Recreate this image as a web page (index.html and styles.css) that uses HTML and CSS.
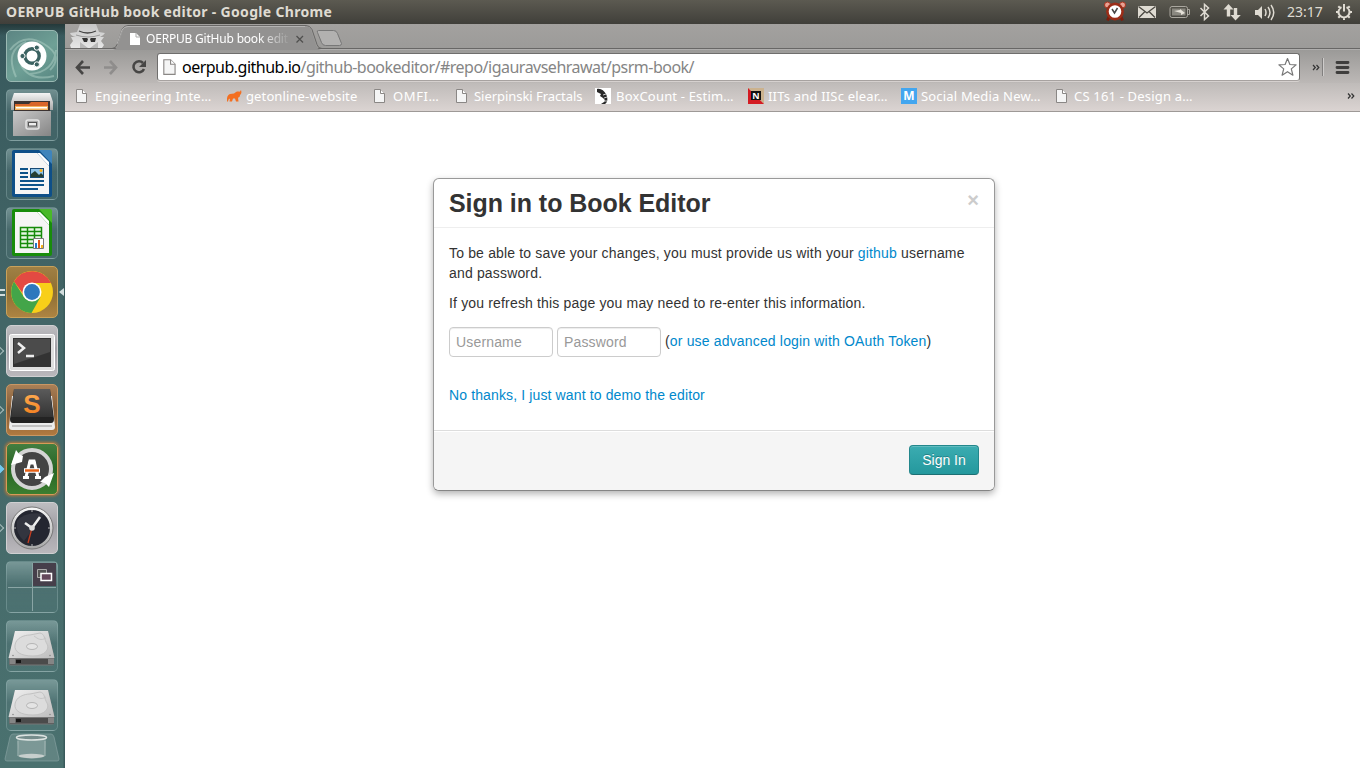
FILE: index.html
```html
<!DOCTYPE html>
<html lang="en">
<head>
<meta charset="utf-8">
<title>OERPUB GitHub book editor</title>
<link rel="stylesheet" href="styles.css">
</head>
<body>
<svg class="defs" width="0" height="0">
  <defs>
    <linearGradient id="silver" x1="0" y1="0" x2="0" y2="1"><stop offset="0" stop-color="#f4f4f4"/><stop offset="1" stop-color="#a8a8a8"/></linearGradient>
    <linearGradient id="dark" x1="0" y1="0" x2="0" y2="1"><stop offset="0" stop-color="#5b5b5b"/><stop offset="1" stop-color="#333"/></linearGradient>
    <linearGradient id="orange" x1="0" y1="0" x2="0" y2="1"><stop offset="0" stop-color="#ffb35a"/><stop offset="1" stop-color="#f07818"/></linearGradient>
    <linearGradient id="metal" x1="0" y1="0" x2="1" y2="1"><stop offset="0" stop-color="#f0f0f0"/><stop offset="1" stop-color="#bdbdbd"/></linearGradient>
    <linearGradient id="cabinet" x1="0" y1="0" x2="1" y2="1"><stop offset="0" stop-color="#c8c8c8"/><stop offset="1" stop-color="#858585"/></linearGradient>
    <linearGradient id="spy" x1="0" y1="0" x2="0" y2="1"><stop offset="0" stop-color="#c6c6c6"/><stop offset="1" stop-color="#e6e6e6"/></linearGradient>
  </defs>
  <symbol id="page" viewBox="0 0 16 16"><path d="M2.500 1.500h6l4 4v9h-10z" fill="#f5f5f5" stroke="#8a8785"/><path d="M8.500 1.500v4h4" fill="#fff" stroke="#8a8785"/></symbol>
  <symbol id="drive" viewBox="0 0 52 52">
    <path d="M9 11h33l6 25v8q0 1.500-2 1.500H5q-2 0-2-1.500v-7z" fill="#777"/>
    <path d="M9 11h33l6.500 27h-46z" fill="url(#metal)"/>
    <path d="M3.500 39h44.500v5.500H3.500z" fill="#4b4b4b"/><path d="M3.500 39h6v5h-6zM42 39h6v5h-6z" fill="#858585"/><path d="M10 40h5v3h-5z" fill="#151515"/>
    <path d="M41 24c3 5-2 12-14 12S8 32 9 25s9-10 15-10l10-2c5 1 4 6 7 11z" fill="#dcdcdc" stroke="#c2c2c2"/>
    <path d="M40 18c-5 3-8 1-12-2" fill="none" stroke="#c5c5c5"/>
    <ellipse cx="26" cy="26.500" rx="5.500" ry="3" fill="#e4e4e4" stroke="#b5b5b5"/>
    <circle cx="7" cy="35.500" r=".8" fill="#888"/><circle cx="44" cy="35.500" r=".8" fill="#888"/>
  </symbol>
</svg>

<header class="panel">
  <div class="panel-title">OERPUB GitHub book editor - Google Chrome</div>
  <svg class="indicators" width="200" height="24" viewBox="1100 0 200 24">
    <path d="M1109 17l-1.500 3.500M1121 17l1.500 3.500" stroke="#7d1d0c" stroke-width="3"/>
    <circle cx="1107.500" cy="5" r="3" fill="#e8a294" stroke="#a8311c"/><circle cx="1122.500" cy="5" r="3" fill="#e8a294" stroke="#a8311c"/>
    <circle cx="1115" cy="11.500" r="7.600" fill="#fff" stroke="#9b2d18" stroke-width="2.600"/><path d="M1112 9l2.500 4 3-5" fill="none" stroke="#444" stroke-width="1.500"/>
    <path d="M1138 6h18v12h-18z" fill="#dfdbd2"/><path d="M1138.500 6.500l8.500 6.500 8.500-6.500M1139 17.500l6-6M1155 17.500l-6-6" fill="none" stroke="#4a4841" stroke-width="1.300"/>
    <rect x="1170" y="6.500" width="17.500" height="11" rx="2" fill="none" stroke="#aaa79f"/><rect x="1172" y="8.500" width="13.500" height="7" fill="#8a8880"/><path d="M1188 9.500h1.500v5H1188" fill="none" stroke="#aaa79f"/><path d="M1174 11l6-1v-1l5 4-4 2v-2z" fill="#e5e1d8"/>
    <path d="M1200.500 8l8 8-4 3.500v-15l4 3.500-8 8" fill="none" stroke="#dfdbd2" stroke-width="1.500"/>
    <path d="M1228.500 4l5 5.500h-3.300v7h-3.400v-7h-3.300zM1235.500 20.500l-5-5.500h3.300V8h3.400v7h3.600z" fill="#dfdbd2"/>
    <path d="M1255 10h3l4-4v13l-4-4h-3z" fill="#dfdbd2"/><path d="M1265 9q2 3.500 0 7M1268 7q4 5.500 0 11M1271 5q5.500 7.500 0 15" fill="none" stroke="#dfdbd2" stroke-width="1.500"/>
  </svg>
  <span class="clock">23:17</span>
  <svg width="18" height="18" viewBox="0 0 18 18"><path d="M6.500 4.100a5.500 5.500 0 1 0 5 0M9 8.500V1M1 9h2.500M14.500 9H17M3.300 3.300l2 2M14.700 3.300l-2 2M3.300 14.700l2-2M14.700 14.700l-2-2M9 14.500V17" fill="none" stroke="#dfdbd2" stroke-width="2"/></svg>
</header>

<div class="desktop">
  <nav class="launcher">
    <div class="tile tile-dash"><svg viewBox="0 0 52 52"><g fill="none" stroke="#b9d6cc" stroke-opacity=".45" stroke-width="2"><path d="M4 20Q18 2 38 14T44 40M10 47Q-2 20 20 12M24 44Q48 42 50 20M15 35Q24 52 48 46"/></g><circle cx="26" cy="26" r="14.500" fill="#fff"/><circle cx="26" cy="26" r="7.200" fill="none" stroke="#3b6261" stroke-width="3.400"/><g fill="#3b6261" stroke="#fff" stroke-width="1"><circle cx="16.500" cy="26" r="2.600"/><circle cx="30.800" cy="17.600" r="2.600"/><circle cx="30.800" cy="34.400" r="2.600"/></g></svg></div>
    <div class="tile"><svg viewBox="0 0 52 52"><path d="M8 4h36l3 9v8H5v-8z" fill="url(#silver)"/><path d="M8 12h36v12H8z" fill="#3c3331"/><path d="M9 15h14l2-2h17v7H9z" fill="#d9662a"/><path d="M9 17h33v4H9z" fill="#f4b45e"/><path d="M10 18h31v1.500H10z" fill="#fff"/><path d="M7 22h38v25H7z" fill="url(#cabinet)"/><rect x="20" y="31" width="13" height="9" rx="2" fill="#aaa" stroke="#e5e5e5" stroke-width="1.500"/><rect x="22.500" y="33.500" width="8" height="3.500" fill="#eee" stroke="#555"/></svg></div>
    <div class="tile"><svg viewBox="0 0 52 52"><path d="M8 2h27l11 12v33q0 2-2 2H8q-2 0-2-2V4q0-2 2-2z" fill="#0e4f88"/><path d="M33 2h11q2 0 2 2v12z" fill="#3f84bb"/><path d="M9 5h22l12 13v28H9z" fill="#f5f5f5"/><path d="M31 5l12 13V14L34 5z" fill="#fff"/><path d="M14 21h8M14 25h8M14 29h8M14 33h24M14 37h24M14 41h18" stroke="#0e5389" stroke-width="2"/><rect x="24.500" y="20.500" width="13" height="9" fill="#90c4e8" stroke="#174a74"/><path d="M25 29v-3l4-3 4 4 2-2 2 2v2z" fill="#263e31"/><circle cx="35" cy="22.500" r="1.500" fill="#f9b11a"/></svg></div>
    <div class="tile"><svg viewBox="0 0 52 52"><path d="M8 2h27l11 12v33q0 2-2 2H8q-2 0-2-2V4q0-2 2-2z" fill="#188c0b"/><path d="M33 2h11q2 0 2 2v12z" fill="#49b928"/><path d="M9 5h22l12 13v28H9z" fill="#f5f5f5"/><path d="M31 5l12 13V14L34 5z" fill="#fff"/><path d="M14.500 20.500h21v20h-21zM14.500 24.500h21M14.500 28.500h21M14.500 32.500h21M14.500 36.500h21M21.500 20.500v20M28.500 20.500v20" fill="#e7f6e2" stroke="#168b0a" stroke-width="1.500"/><path d="M27.500 31.500h10v10h-10z" fill="#fff" stroke="#777"/><path d="M29 36h2v5h-2z" fill="#2478c7"/><path d="M32 33h2v8h-2z" fill="#e15917"/><path d="M35 38h2v3h-2z" fill="#f5b420"/></svg></div>
    <div class="tile tile-gold"><i class="pips"></i><i class="focus"></i><svg viewBox="0 0 52 52"><circle cx="26" cy="26" r="21" fill="#f8cf19"/><path d="M8 15.500A21 21 0 0 1 45 17H26l-8 12z" fill="#e34a42"/><path d="M8 15.500L18 31q4 5 10 4L34.500 31 25.500 47A21 21 0 0 1 8 15.500" fill="#43a549"/><circle cx="26" cy="26" r="9.500" fill="#fff"/><circle cx="26" cy="26" r="7.900" fill="#2e78bd"/></svg></div>
    <div class="tile tile-light"><i class="arrow"></i><svg viewBox="0 0 52 52"><rect x="3.500" y="9.500" width="45" height="36" rx="2" fill="#dedede" stroke="#fff"/><rect x="7" y="13" width="38" height="29" fill="#333"/><path d="M8 14h36v13L8 39z" fill="#4b4b4b"/><path d="M12 18l6 5-6 5M20 31h8" fill="none" stroke="#eee" stroke-width="2.500"/></svg></div>
    <div class="tile tile-brown"><i class="arrow"></i><svg viewBox="0 0 52 52"><path d="M6 12h40l3 31q0 3-3 3H6q-3 0-3-3z" fill="#ededed"/><path d="M6 42h40" stroke="#999"/><path d="M8 5h36l4 30q0 4-3 4H7q-3 0-3-4z" fill="#232323"/><path d="M8 5h36l3 28H5z" fill="url(#dark)"/><text x="26" y="29" class="glyph sublime" fill="url(#orange)">S</text></svg></div>
    <div class="tile tile-green"><i class="arrow arrow-blue"></i><svg viewBox="0 0 52 52"><circle cx="26" cy="26" r="19" fill="#444" stroke="#d4d4d4" stroke-width="4"/><path d="M5 22L10 7l3 4 4 2-1 6zM48 30l-5 14-4-4-5-1 5-5z" fill="#fff"/><path d="M17 34.500h6M29 34.500h6M20 34l4-16h4l4 16M22 20h8" fill="none" stroke="#fff" stroke-width="3"/><path d="M18 27.500h16" stroke="#fff" stroke-width="4.500"/><path d="M19 27.500h14" stroke="#e66219" stroke-width="2.500"/></svg></div>
    <div class="tile tile-light"><i class="arrow"></i><svg viewBox="0 0 52 52"><circle cx="26" cy="26" r="19.500" fill="#242630" stroke="url(#silver)" stroke-width="3"/><circle cx="26" cy="26" r="21" fill="none" stroke="#777"/><path d="M11 19q8-10 27-7L18 39q-9-8-7-20" fill="#41444e" opacity=".5"/><path d="M19 21l7 5 8-11" fill="none" stroke="#eee" stroke-width="2.500"/><path d="M26 26l-4 15" stroke="#c63c1e" stroke-width="1.300"/><circle cx="26" cy="26" r="2.800" fill="#ddd"/><path d="M26 8v2M26 42v2M8 26h2M42 26h2" stroke="#bbb"/></svg></div>
    <div class="tile"><svg viewBox="0 0 52 52"><path d="M27 2h23v23H27z" fill="#463f4b"/><path d="M26.500 2v48M2 26.500h48" stroke="#8aa5a5"/><path d="M31.500 8.500h9v8h-9z" fill="#555" stroke="#aaa"/><path d="M35 12.500h10.500v7H35z" fill="#65485b" stroke="#fff" stroke-width="1.500"/></svg></div>
    <div class="tile"><svg viewBox="0 0 52 52"><use href="#drive"/></svg></div>
    <div class="tile"><svg viewBox="0 0 52 52"><use href="#drive"/></svg></div>
    <svg class="trash" viewBox="0 0 56 30"><path d="M9 1h38q2 0 3 3l5 22q0 2-2 2H3q-2 0-2-2L6 4q1-3 3-3z" fill="#789594" fill-opacity=".5" stroke="#84a09f" stroke-opacity=".7"/><path d="M13 5h29l-1 18q-13 6-26 0z" fill="#aebfbc" opacity=".35"/><ellipse cx="27.500" cy="4.500" rx="15" ry="2.500" fill="#758c8b" stroke="#dce3e1" stroke-width="1.500"/><path d="M14 8v15M41 8v15" stroke="#a5b8b6"/><ellipse cx="27.500" cy="23" rx="13" ry="2.200" fill="#c7cfcd"/></svg>
  </nav>

  <div class="browser">
    <div class="tabstrip">
      <svg class="tabs-shape" width="290" height="26" viewBox="65 24 290 26">
        <path d="M65 48.500h47q4 0 5-4l5-15q2-4 6-4h178q4 0 6 4l5 15q1 4 5 4h38" fill="none" stroke="#686766"/>
        <path d="M113 50q4-1 5-5l5-15q1-3.500 5-3.500h178q4 0 5 3.500l5 15q1 4 5 5z" fill="#939291"/>
        <path d="M117 44l5-14q2-3.500 6-3.500h177" fill="none" stroke="#b4b3b2"/>
        <path d="M318.500 30.500h15q3 0 4 3l4 10q0 2-2 2h-14q-3 0-4-3l-4-10q-1-2 1-2z" fill="#b2b1b0" stroke="#777"/>
        <path d="M80 24h16l3 8 6 1q-1 2-5 4h4l-3 4 3 4-2 3H71l-1-3 3-4-2-4h5q-5-1-6-4l7-1z" fill="url(#spy)"/>
        <path d="M79 31q8.500 4 17 0" fill="none" stroke="#444" stroke-width="1.300"/><path d="M76 35q12 4 24 0" fill="none" stroke="#999"/>
        <path d="M82 38h5l1 1h2l1-1h5l-1 4h-4l-1-3h-2l-1 3h-3z" fill="#333"/><path d="M80 42l8 6h-8zM98 42l-8 6h8z" fill="#b9b9b9"/>
        <path d="M130 33h6l4 4v8h-10z" fill="#fff"/><path d="M136 33v4h4" fill="none" stroke="#aaa"/>
        <path d="M296.500 36l6.500 6.500M303 36l-6.500 6.500" stroke="#50504f" stroke-width="1.300"/>
      </svg>
      <div class="tab-label">OERPUB GitHub book edit</div>
    </div>

    <div class="toolbar">
      <svg class="nav-icons" width="84" height="28" viewBox="70 53 84 28"><g fill="none" stroke-width="2.600"><path d="M83 61l-6 6.500 6 6.500M77 67.500h13" stroke="#474645"/><path d="M110 61l6 6.500-6 6.500M116 67.500h-12" stroke="#8f8d8c"/><path d="M143 63a5.500 5.500 0 1 0 1 6" stroke="#474645"/></g><path d="M146 60v7h-7z" fill="#474645"/></svg>
      <div class="omnibox">
        <svg width="18" height="18" viewBox="0 0 16 16"><use href="#page"/></svg>
        <span class="url"><b>oerpub.github.io</b>/github-bookeditor/#repo/igauravsehrawat/psrm-book/</span>
        <svg width="20" height="20" viewBox="0 0 20 20"><path d="M10.500 1.500l2.400 6 6.200.400-4.800 4 1.600 6.300-5.400-3.500-5.400 3.500 1.600-6.300-4.800-4 6.200-.400z" fill="#fff" stroke="#777" stroke-width="1.200" stroke-linejoin="round"/></svg>
      </div>
      <svg class="tool-icons" width="60" height="28" viewBox="1300 53 60 28"><path d="M1313 65l2.300 2.500-2.300 2.500M1316.500 65l2.300 2.500-2.300 2.500" fill="none" stroke="#333" stroke-width="1.200"/><path d="M1322.500 58v18" stroke="#817f7e"/><path d="M1323.500 58v18" stroke="#cecccb"/><path d="M1337 62.500h11M1337 67.500h11M1337 72.500h11" stroke="#3f3e3d" stroke-width="2.800" stroke-linecap="round"/></svg>
    </div>

    <div class="bookmarks">
      <div class="bm bm-1"><svg viewBox="0 0 16 16"><use href="#page"/></svg>Engineering Inte…</div>
      <div class="bm bm-2"><svg viewBox="0 0 16 16"><path d="M1 13.500c0-4 0-6 3-7.500l4-.5 2-1.500c2-1 3 0 4-.5l1-1.500c1 3 0 4-1 5 0 2-1 2.500-2 2.500l.5 4H10l-1-3H7l-1 3H3.500l.5-3-1.500 1-.5 2z" fill="#f36f21"/></svg>getonline-website</div>
      <div class="bm bm-3"><svg viewBox="0 0 16 16"><use href="#page"/></svg>OMFI…</div>
      <div class="bm bm-4"><svg viewBox="0 0 16 16"><use href="#page"/></svg>Sierpinski Fractals</div>
      <div class="bm bm-5"><svg viewBox="0 0 16 16"><path d="M0 0h16v16H0z" fill="#fff"/><path d="M2 1c4-1 7 2 9 5 2 4 2 8-1 10H6l3-2c2-2 0-3-1-4l-3-2 1-2-4-2z" fill="#292929"/><path d="M8 7l3-1M9 10l3-1M9 13l3 0" stroke="#ccc"/></svg>BoxCount - Estim…</div>
      <div class="bm bm-6"><svg viewBox="0 0 16 16"><path d="M0 0h16v16z" fill="#cbb28e"/><path d="M0 0v16h16z" fill="#d41b22"/><path d="M3 3h10v9H3z" fill="#111"/><text x="8" y="11.300" class="glyph news" fill="#fff">N</text></svg>IITs and IISc elear…</div>
      <div class="bm bm-7"><svg viewBox="0 0 16 16"><path d="M0 0h16v16H0z" fill="#43a6ef"/><text x="8" y="12.200" class="glyph mash" fill="#fff">M</text></svg>Social Media New…</div>
      <div class="bm bm-8"><svg viewBox="0 0 16 16"><use href="#page"/></svg>CS 161 - Design a…</div>
      <svg class="more" viewBox="0 0 8 8"><path d="M1 1.500L3.300 4 1 6.500M4.500 1.500L6.800 4 4.500 6.500" fill="none" stroke="#333" stroke-width="1.200"/></svg>
    </div>

    <main class="viewport">
      <section class="modal">
        <div class="modal-header"><h3>Sign in to Book Editor</h3><button class="close">×</button></div>
        <div class="modal-body">
          <p>To be able to save your changes, you must provide us with your <a>github</a> username and password.</p>
          <p>If you refresh this page you may need to re-enter this information.</p>
          <div class="login"><input type="text" placeholder="Username"><input type="password" placeholder="Password"><span>(<a>or use advanced login with OAuth Token</a>)</span></div>
          <p class="demo"><a>No thanks, I just want to demo the editor</a></p>
        </div>
        <div class="modal-footer"><button class="btn">Sign In</button></div>
      </section>
    </main>
  </div>
</div>
</body>
</html>
```
FILE: styles.css
```css
* { box-sizing: border-box; }
body { margin: 0; width: 1360px; height: 768px; overflow: hidden; background: #fff; font: 14px/20px "Liberation Sans", Arial, sans-serif; color: #333; }
svg { display: block; flex: none; }
.defs { position: absolute; }

.panel { display: flex; align-items: center; height: 24px; padding: 0 7px 0 6px; background: linear-gradient(#5c5a51, #403f3a); color: #dfdbd2; font-family: "Noto Sans", sans-serif; }
.panel-title { flex: 1; font-size: 14px; font-weight: 700; white-space: nowrap; letter-spacing: .31px; }
.indicators { margin-right: -13px; }
.clock { width: 48px; font-size: 14px; }

.desktop { display: flex; height: 744px; }
.launcher { display: flex; flex-direction: column; gap: 7px; flex: none; width: 65px; padding: 6px 0 0 6px; background: linear-gradient(#24393a, transparent 12px), linear-gradient(90deg, transparent 63px, #395a5b 64px), linear-gradient(#38595d, #436667 40%, #4a716f); }
.tile { position: relative; flex: none; width: 52px; height: 52px; border: 1px solid rgba(160,190,190,.35); border-radius: 5px; background: linear-gradient(rgba(180,205,205,.45), rgba(100,130,135,.2) 45%, rgba(100,140,140,.15)); }
.tile svg { width: 52px; height: 52px; margin: -1px; border-radius: 5px; }
.tile-dash { background: linear-gradient(145deg, #5c8583, #6fa096 55%, #578681); border-color: #9ab9b3; }
.tile-gold { background: linear-gradient(#a08044, #8d6e34 50%, #ad8442); border-color: #c9a25b; }
.tile-light { background: linear-gradient(#bdbdc0, #a19fa5 45%, #bab8bc); border-color: #d0d0d2; }
.tile-brown { background: linear-gradient(#aa8056, #815a36 50%, #b17a40); border-color: #c99764; }
.tile-green { background: linear-gradient(#437e40, #286525 50%, #3b7e30); border-color: #d79b58; box-shadow: 0 0 3px 1px #b97937; }
.glyph { text-anchor: middle; font-family: "Open Sans", sans-serif; font-weight: 700; }
.sublime { font: 700 26px "Liberation Sans", sans-serif; }
.news { font-size: 9px; }
.mash { font-size: 12px; }
.arrow, .pips, .focus { position: absolute; }
.arrow { left: -10px; top: 22px; width: 6px; height: 6px; border: solid #a7bcbb; border-width: 1px 1px 0 0; transform: rotate(45deg); }
.arrow-blue { background: #72c8ee; border-color: #72c8ee; }
.pips { left: -7px; top: 22px; width: 5px; height: 7px; border: solid #d2dddd; border-width: 2px 0; }
.focus { right: -7px; top: 21px; border: 4px solid transparent; border-right: 5px solid #d2dddd; border-left: 0; }
.trash { width: 56px; height: 30px; margin: -5px 0 0 -2px; }

.browser { display: flex; flex-direction: column; width: 1295px; }
.tabstrip { display: grid; height: 26px; background: linear-gradient(#a3a19f, #9c9b99 24px, #686766 24px, #686766 25px, #afaead 25px); }
.tabs-shape, .tab-label { grid-area: 1 / 1; }
.tab-label { width: 144px; margin-left: 81px; padding-top: 5px; color: #fff; font: 12px/20px "Noto Sans", sans-serif; letter-spacing: -.2px; white-space: nowrap; mask-image: linear-gradient(90deg, #000 112px, transparent 145px); }
.toolbar { display: flex; height: 33px; padding: 3px 0 2px 5px; background: linear-gradient(#9b9a98, #bcb8b6); }
.nav-icons { margin-right: 3px; }
.omnibox { display: flex; align-items: center; width: 1143px; height: 28px; margin: 0; padding: 0 2px 0 3px; border: 1px solid #6f6e6d; border-bottom-color: #a7a2a0; border-radius: 3px; background: #fff; box-shadow: 0 1px #d6d1cf; }
.url { flex: 1; margin-left: 3px; color: #858585; font: 16px/24px "Noto Sans", sans-serif; white-space: nowrap; letter-spacing: -.51px; }
.url b { color: #000; font-weight: 400; }
.bookmarks { display: grid; grid-template-columns: 152px 146px 82px 141px 153px 153px 153px 293px 8px; align-items: center; height: 29px; padding: 0 0 3px 9px; border-bottom: 1px solid #9e9997; background: linear-gradient(#bfbbb9, #dbd4d2); }
.bm { display: flex; align-items: center; gap: 4px; color: #fff; font: 13px/18px "Noto Sans", sans-serif; white-space: nowrap; letter-spacing: .18px; }
.bm-1 { gap: 5px; letter-spacing: .25px; }
.bm-2 { letter-spacing: .12px; }
.bm-3 { gap: 5px; letter-spacing: .6px; }
.bm-4 { letter-spacing: -.05px; }
.bm-5 { gap: 5px; }
.bm svg { width: 16px; height: 16px; }
.more { width: 8px; height: 8px; }

.viewport { flex: 1; padding-top: 66px; background: #fff; }
.modal { width: 562px; height: 313px; margin-left: 368px; border: 1px solid #999; border-bottom-color: #858585; border-radius: 6px; background: #fff; box-shadow: 0 3px 7px rgba(0,0,0,.3); overflow: hidden; letter-spacing: .165px; }
.modal-header { display: flex; justify-content: space-between; height: 49px; padding: 9px 15px; border-bottom: 1px solid #eee; }
h3 { margin: 0; font-size: 25px; line-height: 31px; letter-spacing: -.05px; }
button { font-family: inherit; border: 0; }
.close { align-self: flex-start; margin-top: 2px; padding: 0; background: none; color: #ccc; font-size: 20px; line-height: 20px; font-weight: 700; }
.modal-body { height: 202px; padding: 15px; }
p { margin: 0 0 10px; }
a { color: #0088cc; }
.login { display: flex; gap: 4px; margin-top: 14px; line-height: 28px; }
input { width: 104px; height: 30px; padding: 4px 6px; border: 1px solid #ccc; border-radius: 4px; font: 14px/20px "Liberation Sans", sans-serif; letter-spacing: .16px; box-shadow: inset 0 1px 1px rgba(0,0,0,.075); }
input::placeholder { color: #999; }
.demo { margin-top: 28px; letter-spacing: .13px; }
.modal-footer { display: flex; justify-content: flex-end; height: 60px; padding: 14px 15px 15px; border-top: 1px solid #ddd; background: #f5f5f5; box-shadow: inset 0 1px #fff; }
.btn { width: 70px; height: 30px; padding: 0; border: 1px solid #23878c; border-bottom-color: #1d6f73; border-radius: 4px; background: linear-gradient(#3bacb1, #24989d); color: #fff; font-size: 14px; line-height: 20px; text-shadow: 0 -1px rgba(0,0,0,.25); box-shadow: inset 0 1px rgba(255,255,255,.2); }
```
